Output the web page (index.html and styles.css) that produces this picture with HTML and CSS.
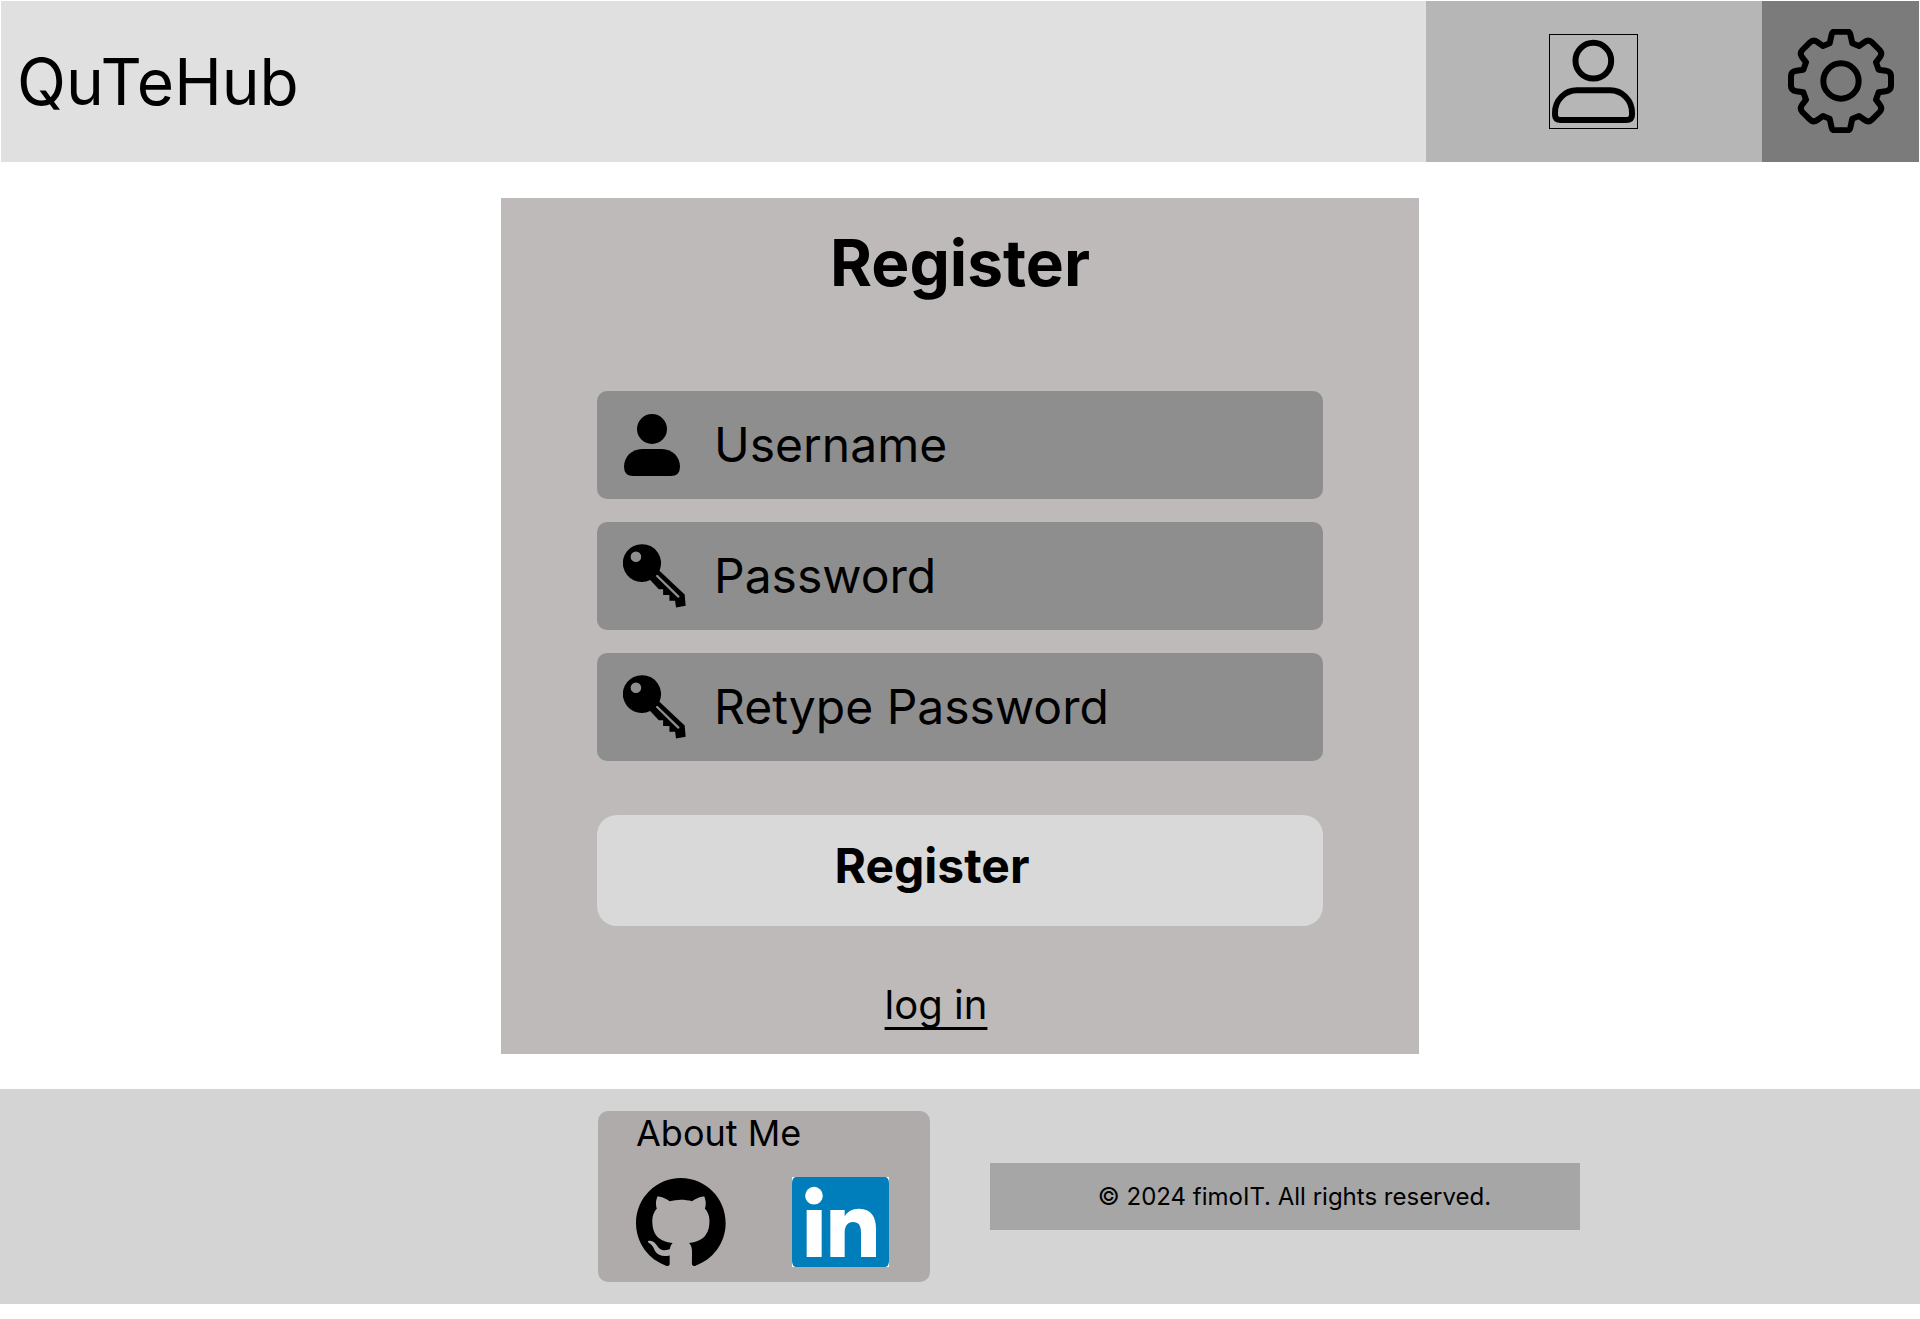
FILE: index.html
```html
<!DOCTYPE html>
<html lang="en">
<head>
<meta charset="utf-8">
<meta name="viewport" content="width=device-width, initial-scale=1">
<title>QuTeHub – Register</title>
<link rel="stylesheet" href="styles.css">
</head>
<body>
<svg class="defs" aria-hidden="true">
  <symbol id="key" viewBox="0 0 190 192">
    <path d="M57 0a57 57 0 0 1 53 80L186 152 189 186 160 191 157 171H140V153H121V136H108L82 108A57 57 0 1 1 57 0ZM39 22a16 16 0 1 0 0 32a16 16 0 1 0 0-32Z"/>
    <path class="slot" d="M103 96 167 158"/>
  </symbol>
</svg>

<header class="topbar">
  <div class="brand">QuTeHub</div>
  <nav class="account">
    <a class="account-link" href="#account" aria-label="Account">
      <svg viewBox="0 0 267 285" aria-hidden="true">
        <circle cx="133" cy="80" r="53.5"/>
        <path d="M84 169H183C219 169 249 198 249 236V242Q249 258 231 258H36Q18 258 18 242V236C18 198 48 169 84 169Z"/>
      </svg>
    </a>
  </nav>
  <button class="settings" type="button" aria-label="Settings">
    <svg viewBox="-159 -156 318 312" aria-hidden="true">
      <circle r="53"/>
      <path id="gear" d="M1 -148H-21Q-26 -148 -28 -140L-34 -113-54 -105-71 -117Q-83 -126 -93 -116L-116 -93Q-125 -83 -117 -72L-105 -56-113 -34-134 -31Q-150 -28 -150 -15V1"/>
      <use href="#gear" transform="scale(-1 1)"/>
      <use href="#gear" transform="scale(1 -1)"/>
      <use href="#gear" transform="scale(-1 -1)"/>
    </svg>
  </button>
</header>

<main class="page">
  <form class="card">
    <h1>Register</h1>
    <div class="fields">
      <label class="field">
        <span class="icon">
          <svg class="user" viewBox="0 0 168 186" aria-hidden="true">
            <circle cx="84" cy="45" r="45"/>
            <path d="M54 105H114C146 105 168 130 168 158Q168 186 140 186H28Q0 186 0 158C0 130 22 105 54 105Z"/>
          </svg>
        </span>
        <input type="text" placeholder="Username" aria-label="Username" autocomplete="username">
      </label>
      <label class="field">
        <span class="icon"><svg class="key" aria-hidden="true"><use href="#key"/></svg></span>
        <input type="password" placeholder="Password" aria-label="Password" autocomplete="new-password">
      </label>
      <label class="field">
        <span class="icon"><svg class="key" aria-hidden="true"><use href="#key"/></svg></span>
        <input type="password" placeholder="Retype Password" aria-label="Retype Password" autocomplete="new-password">
      </label>
    </div>
    <button class="submit" type="submit">Register</button>
    <p class="login"><a href="#login">log in</a></p>
  </form>
</main>

<footer class="footer">
  <section class="about">
    <h2>About Me</h2>
    <div class="links">
      <a href="#github" aria-label="GitHub">
        <svg class="github" viewBox="0 0 98 96" preserveAspectRatio="none" aria-hidden="true">
          <path fill-rule="evenodd" d="M48.854 0C21.839 0 0 22 0 49.217c0 21.756 13.993 40.172 33.405 46.69 2.427.49 3.316-1.059 3.316-2.362 0-1.141-.08-5.052-.08-9.127-13.59 2.934-16.42-5.867-16.42-5.867-2.184-5.704-5.42-7.17-5.42-7.17-4.448-3.015.324-3.015.324-3.015 4.934.326 7.523 5.052 7.523 5.052 4.367 7.496 11.404 5.378 14.235 4.074.404-3.178 1.699-5.378 3.074-6.6-10.839-1.141-22.243-5.378-22.243-24.283 0-5.378 1.94-9.778 5.014-13.2-.485-1.222-2.184-6.275.486-13.038 0 0 4.125-1.304 13.426 5.052a46.97 46.97 0 0 1 12.214-1.63c4.125 0 8.33.571 12.213 1.63 9.302-6.356 13.427-5.052 13.427-5.052 2.67 6.763.97 11.816.485 13.038 3.155 3.422 5.015 7.822 5.015 13.2 0 18.905-11.404 23.06-22.324 24.283 1.78 1.548 3.316 4.481 3.316 9.126 0 6.6-.08 11.897-.08 13.526 0 1.304.89 2.853 3.316 2.364 19.412-6.52 33.405-24.935 33.405-46.691C97.707 22 75.788 0 48.854 0z"/>
        </svg>
      </a>
      <a href="#linkedin" aria-label="LinkedIn">
        <svg class="linkedin" viewBox="0 0 291 270" aria-hidden="true">
          <rect width="291" height="270" fill="#fff"/>
          <rect width="291" height="270" rx="11" ry="18" fill="#007ebb"/>
          <g fill="#fff">
            <circle cx="66" cy="56" r="26.5"/>
            <rect x="44" y="99" width="45" height="141"/>
            <path d="M115 99H158V118C166 104 180 95 201 95C238 95 252 120 252 155V240H207V168C207 145 200 135 183 135C166 135 158 148 158 168V240H115Z"/>
          </g>
        </svg>
      </a>
    </div>
  </section>
  <p class="copyright">© 2024 fimoIT. All rights reserved.</p>
</footer>
</body>
</html>
```

FILE: styles.css
```css
* {
  box-sizing: border-box;
}

body {
  margin: 0;
  background: #fff;
  color: #000;
  font-family: Inter, "Liberation Sans", sans-serif;
}

h1, h2, p {
  margin: 0;
}

svg {
  display: block;
}

a {
  color: inherit;
}

.defs {
  position: absolute;
  width: 0;
  height: 0;
}

/* Header */
.topbar {
  display: grid;
  grid-template-columns: 1fr 336px 157px;
  min-height: 162px;
  padding: 1px 1px 0;
}

.brand {
  display: flex;
  align-items: center;
  padding-left: 16px;
  background: #e0e0e0;
  font-size: 64px;
  line-height: 78px;
}

.account {
  display: flex;
  align-items: center;
  justify-content: center;
  padding-right: 2px;
  background: #b6b6b6;
}

.account-link {
  outline: 1px solid #000;
  outline-offset: -1px;
}

.account-link svg {
  width: 89px;
  height: 95px;
}

.account-link svg,
.settings svg {
  fill: none;
  stroke: #000;
  stroke-width: 18px;
  stroke-linejoin: round;
}

.settings {
  display: flex;
  align-items: center;
  justify-content: center;
  padding: 0 0 1px;
  border: 0;
  background: #7b7b7b;
}

.settings svg {
  width: 106px;
  height: 104px;
}

/* Registration card */
.page {
  padding: 36px 0 35px;
}

.card {
  display: flex;
  flex-direction: column;
  max-width: 918px;
  margin: 0 auto;
  padding: 26px 96px 25px;
  background: #bebab9;
}

h1 {
  margin-bottom: 89px;
  font-size: 64px;
  font-weight: 700;
  line-height: 78px;
  text-align: center;
}

.fields {
  display: grid;
  grid-template-columns: minmax(0, 1fr);
  gap: 23px;
  margin-bottom: 54px;
}

.field {
  display: flex;
  align-items: center;
  gap: 28px;
  min-height: 108px;
  padding: 0 26px;
  border-radius: 10px;
  background: #8e8e8e;
}

.icon {
  flex: none;
  width: 63px;
}

.user {
  width: 56px;
  height: 62px;
  margin-left: 1px;
}

.key {
  width: 63px;
  height: 64px;
  fill-rule: evenodd;
}

.slot {
  fill: none;
  stroke: #8e8e8e;
  stroke-width: 7px;
  stroke-linecap: round;
}

.field input {
  flex: 1;
  min-width: 0;
  height: 58px;
  padding: 0;
  border: 0;
  outline: 0;
  background: none;
  color: #000;
  font: 400 48px/58px Inter, "Liberation Sans", sans-serif;
}

.field input::placeholder {
  color: #000;
  opacity: 1;
}

.submit {
  margin-bottom: 55px;
  padding: 22px 56px 31px 0;
  border: 0;
  border-radius: 20px;
  background: #d9d9d9;
  color: #000;
  font: 700 48px/58px Inter, "Liberation Sans", sans-serif;
}

.login {
  padding-right: 48px;
  font-size: 40px;
  line-height: 48px;
  text-align: center;
}

.login a {
  text-decoration: underline;
  text-decoration-skip-ink: none;
  text-decoration-thickness: 3px;
  text-underline-offset: 8px;
}

/* Footer */
.footer {
  display: flex;
  align-items: center;
  justify-content: center;
  gap: 60px;
  padding: 22px 0 22px 258px;
  background: #d4d4d4;
}

.about {
  padding: 0 41px 15px 38px;
  border-radius: 10px;
  background: #afabaa;
}

h2 {
  margin-bottom: 22px;
  font-size: 36px;
  font-weight: 400;
  line-height: 44px;
}

.links {
  display: flex;
  align-items: center;
  gap: 66px;
}

.github {
  width: 90px;
  height: 88px;
}

.linkedin {
  width: 97px;
  height: 90px;
}

.copyright {
  flex: 0 1 590px;
  padding: 19px 0 19px 19px;
  background: #a6a6a6;
  font-size: 24px;
  line-height: 29px;
  text-align: center;
}
```
